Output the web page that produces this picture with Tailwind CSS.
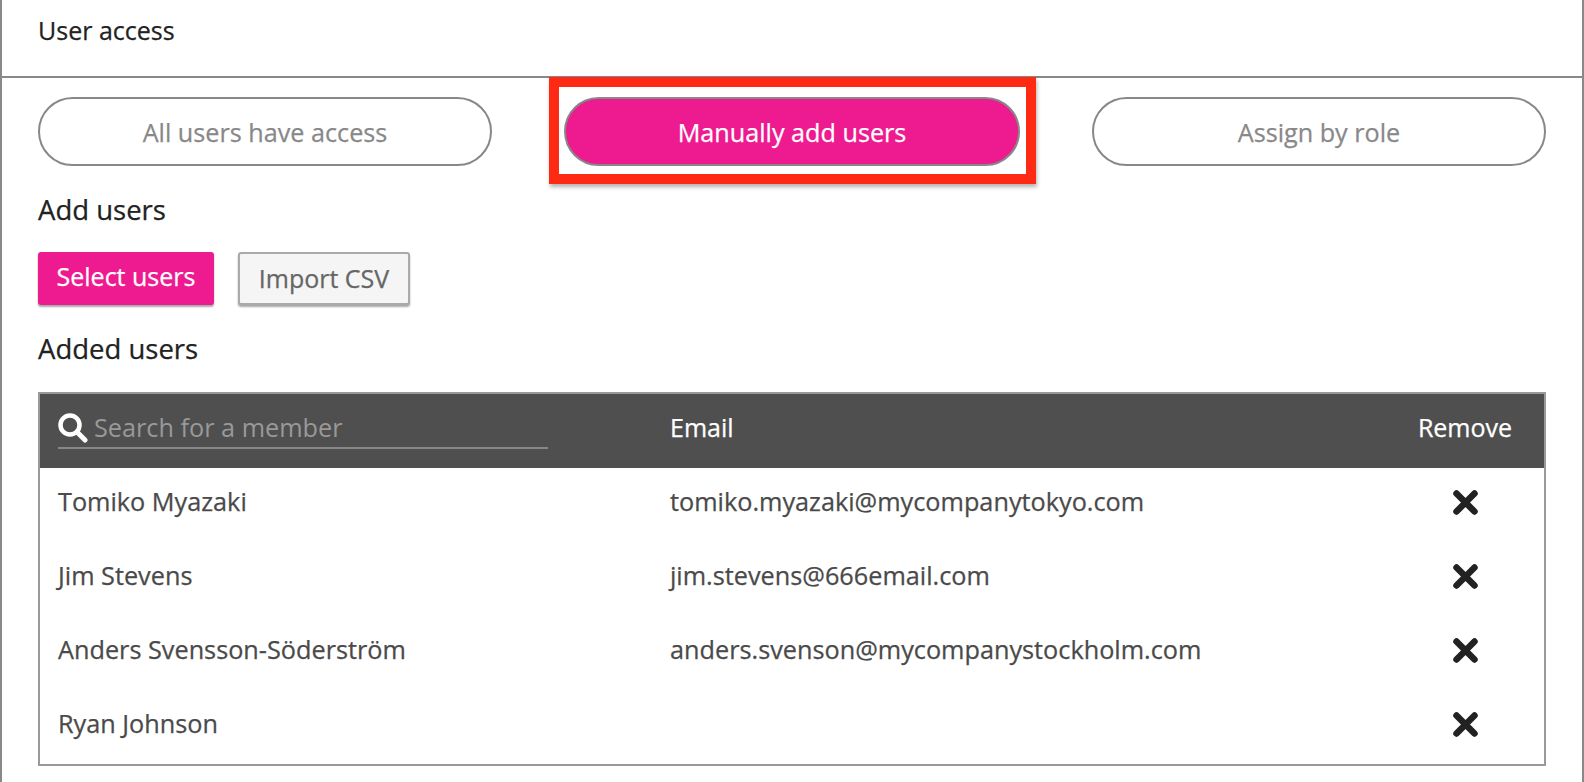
<!DOCTYPE html>
<html lang="en">
<head>
  <meta charset="UTF-8" />
  <title>User access</title>
  <script src="https://cdn.jsdelivr.net/npm/@tailwindcss/browser@4"></script>
</head>
<body class="bg-white font-['Open_Sans',sans-serif] text-[#222] [-webkit-text-stroke:0.25px]">
  <div class="relative h-[782px] overflow-hidden border-x-2 border-[#888]">

    <div class="flex h-[78px] items-center border-b-2 border-[#888] pb-[14px] pl-[36px] text-[25px]">User access</div>

    <div class="flex justify-between pl-[36px] pr-[36px] pt-[19px]">
      <div class="flex h-[69px] w-[454px] items-center justify-center rounded-full border-2 border-[#888] pt-[2px] text-[25.2px] text-[#888]">All users have access</div>
      <div class="flex h-[69px] w-[456px] items-center justify-center rounded-full border-2 border-[#888] bg-[#ee1a8f] pt-[2px] text-[25.2px] text-white">Manually add users</div>
      <div class="flex h-[69px] w-[454px] items-center justify-center rounded-full border-2 border-[#888] pt-[2px] text-[25.2px] text-[#888]">Assign by role</div>
    </div>

    <!-- red callout round the middle pill -->
    <div class="absolute left-[547px] top-[77px] h-[107px] w-[487px] border-[10px] border-[#ff2a14] shadow-[1px_3px_4px_rgba(0,0,0,0.3)]"></div>

    <h2 class="mt-[26px] pl-[36px] text-[27.5px] leading-[36px]">Add users</h2>

    <div class="mt-[24px] flex gap-[24px] pl-[36px]">
      <button class="h-[53px] w-[176px] rounded-[3px] bg-[#ee1a8f] pb-[4px] text-[25px] text-white shadow-[0_2px_2px_rgba(0,0,0,0.35)]">Select users</button>
      <button class="h-[53px] w-[172px] rounded-[3px] border-2 border-[#aaa] bg-[#f5f5f5] text-[25px] text-[#666] shadow-[0_2px_2px_rgba(0,0,0,0.35)]">Import CSV</button>
    </div>

    <h2 class="mt-[26px] pl-[36px] text-[27.5px] leading-[36px]">Added users</h2>

    <div class="ml-[36px] mr-[36px] mt-[25px] border-2 border-[#999]">
      <div class="flex h-[74px] items-center bg-[#4f4f4f] pl-[18px] text-[25px] text-white">
        <div class="w-[612px] pb-[4px]">
          <div class="flex h-[40px] w-[490px] items-center gap-[6px] border-b-2 border-[#888]">
            <svg class="h-[30px] w-[30px]" viewBox="0 0 30 30" fill="none" stroke="#fff" stroke-linecap="round">
              <circle cx="12" cy="12" r="9.5" stroke-width="4.5" />
              <path d="M19 19 L27 27" stroke-width="5" />
            </svg>
            <span class="text-[25.25px] text-[#999] [-webkit-text-stroke:0px]">Search for a member</span>
          </div>
        </div>
        <div class="flex-1 pb-[7px]">Email</div>
        <div class="w-[158px] pb-[7px] text-center">Remove</div>
      </div>

      <div class="flex h-[74px] items-center pb-[6px] pl-[18px] text-[25.25px] text-[#4a4a4a]">
        <div class="w-[612px]">Tomiko Myazaki</div>
        <div class="flex-1">tomiko.myazaki@mycompanytokyo.com</div>
        <div class="flex w-[158px] justify-center">
          <svg class="h-[25px] w-[25px]" viewBox="0 0 25 25" stroke="#222" stroke-width="6.5" stroke-linecap="round"><path d="M3.5 3.5 L21.5 21.5 M21.5 3.5 L3.5 21.5" /></svg>
        </div>
      </div>
      <div class="flex h-[74px] items-center pb-[6px] pl-[18px] text-[25.25px] text-[#4a4a4a]">
        <div class="w-[612px]">Jim Stevens</div>
        <div class="flex-1">jim.stevens@666email.com</div>
        <div class="flex w-[158px] justify-center">
          <svg class="h-[25px] w-[25px]" viewBox="0 0 25 25" stroke="#222" stroke-width="6.5" stroke-linecap="round"><path d="M3.5 3.5 L21.5 21.5 M21.5 3.5 L3.5 21.5" /></svg>
        </div>
      </div>
      <div class="flex h-[74px] items-center pb-[6px] pl-[18px] text-[25.25px] text-[#4a4a4a]">
        <div class="w-[612px]">Anders Svensson-Söderström</div>
        <div class="flex-1">anders.svenson@mycompanystockholm.com</div>
        <div class="flex w-[158px] justify-center">
          <svg class="h-[25px] w-[25px]" viewBox="0 0 25 25" stroke="#222" stroke-width="6.5" stroke-linecap="round"><path d="M3.5 3.5 L21.5 21.5 M21.5 3.5 L3.5 21.5" /></svg>
        </div>
      </div>
      <div class="flex h-[74px] items-center pb-[6px] pl-[18px] text-[25.25px] text-[#4a4a4a]">
        <div class="w-[612px]">Ryan Johnson</div>
        <div class="flex-1"></div>
        <div class="flex w-[158px] justify-center">
          <svg class="h-[25px] w-[25px]" viewBox="0 0 25 25" stroke="#222" stroke-width="6.5" stroke-linecap="round"><path d="M3.5 3.5 L21.5 21.5 M21.5 3.5 L3.5 21.5" /></svg>
        </div>
      </div>
    </div>
  </div>
</body>
</html>
